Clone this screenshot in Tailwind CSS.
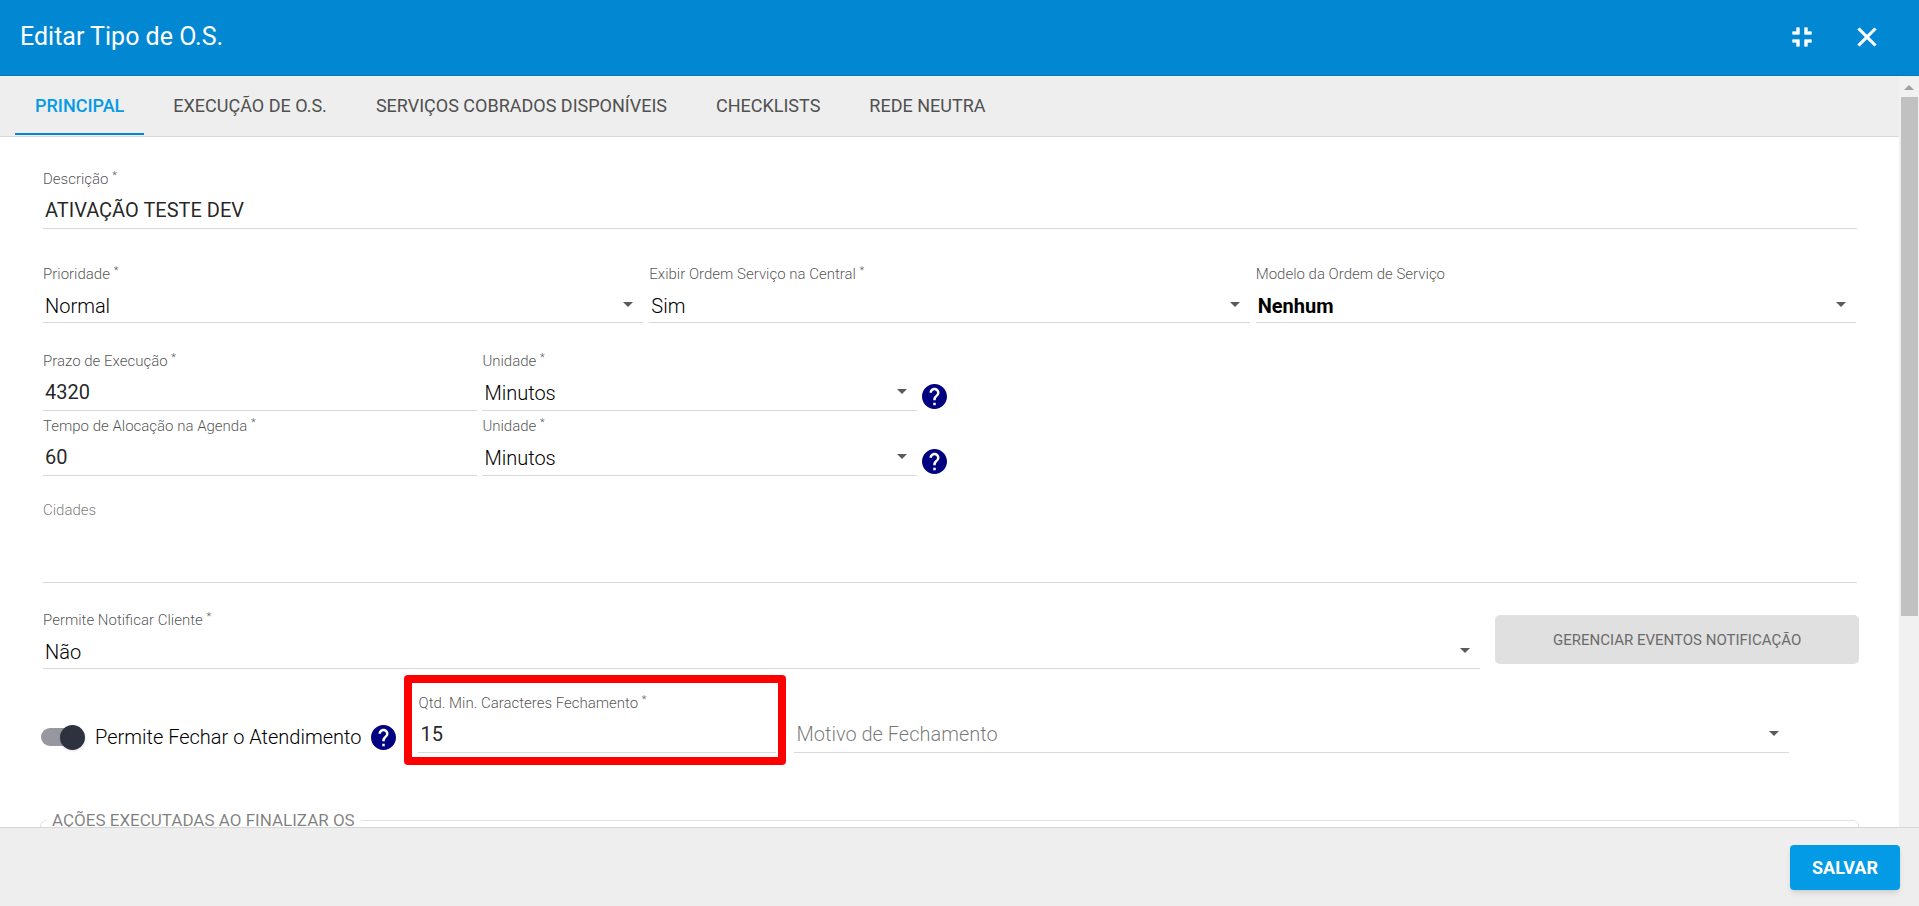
<!DOCTYPE html>
<html lang="pt-BR">
<head>
<meta charset="utf-8">
<title>Editar Tipo de O.S.</title>
<script src="https://cdn.jsdelivr.net/npm/@tailwindcss/browser@4"></script>
</head>
<body class="flex h-screen flex-col overflow-hidden bg-white font-['Roboto','Liberation_Sans',sans-serif] text-xl font-light text-black">
<svg class="hidden">
  <symbol id="caret" viewBox="0 0 10 5"><path d="M0 0h10L5 5z"/></symbol>
  <symbol id="help" viewBox="2 2 20 20"><circle cx="12" cy="12" r="9.4" fill="#fff"/><path d="M12 2C6.48 2 2 6.48 2 12s4.48 10 10 10 10-4.48 10-10S17.52 2 12 2zm1 17h-2v-2h2v2zm2.07-7.75l-.9.92C13.45 12.9 13 13.5 13 15h-2v-.5c0-1.1.45-2.1 1.17-2.83l1.24-1.26c.37-.36.59-.86.59-1.41 0-1.1-.9-2-2-2s-2 .9-2 2H8c0-2.21 1.79-4 4-4s4 1.79 4 4c0 .88-.36 1.68-.93 2.25z" fill="#000080" stroke="#000080" stroke-width="0"/></symbol>
</svg>

<header class="flex h-[76px] shrink-0 items-center justify-between border-b border-[#0a78b8] bg-[#0288d3] pr-9 pb-[2px] pl-5 text-white">
  <h1 class="text-[25px] font-normal">Editar Tipo de O.S.</h1>
  <div class="flex items-center gap-[33px]">
    <button type="button" aria-label="Restaurar tamanho" class="size-8"><svg viewBox="0 0 24 24" class="size-8" fill="#fff"><path d="M5 16h3v3h2v-5H5v2zm3-8H5v2h5V5H8v3zm6 11h2v-3h3v-2h-5v5zm2-11V5h-2v5h5V8h-3z" stroke="#fff" stroke-width=".5"/></svg></button>
    <button type="button" aria-label="Fechar" class="size-8"><svg viewBox="0 0 24 24" class="size-8" fill="#fff"><path d="M19 6.41L17.59 5 12 10.59 6.41 5 5 6.41 10.59 12 5 17.59 6.41 19 12 13.41 17.59 19 19 17.59 13.41 12z" stroke="#fff" stroke-width=".4"/></svg></button>
  </div>
</header>

<div class="flex min-h-0 flex-1">
  <main class="min-w-0 flex-1 overflow-hidden">
    <nav class="flex h-[61px] gap-[9px] border-b border-[#d8d8d8] bg-[#eee] px-[15px] text-lg leading-6 font-normal text-[#505050] uppercase">
      <a href="#principal" class="h-[59px] border-b-2 border-[#0288d1] px-5 pt-[18px] font-medium text-[#039be5]">Principal</a>
      <a href="#execucao" class="px-5 pt-[18px]">Execução de O.S.</a>
      <a href="#servicos" class="px-5 pt-[18px]">Serviços cobrados disponíveis</a>
      <a href="#checklists" class="px-5 pt-[18px]">Checklists</a>
      <a href="#rede" class="px-5 pt-[18px]">Rede neutra</a>
    </nav>

    <form id="tipo" class="px-10 pt-8">
      <div class="flex flex-col pr-[2px] pl-[3px]">
        <label for="descricao" class="text-[15px] leading-5 text-black/70">Descrição <sup class="text-[11px]">*</sup></label>
        <input id="descricao" value="ATIVAÇÃO TESTE DEV" class="mt-[3px] h-[37px] border-b border-black/15 px-[2px] font-normal text-black/87 outline-none">
      </div>

      <div class="mt-[35px] flex gap-[6px] px-[3px]">
        <div class="flex flex-1 flex-col">
          <label for="prioridade" class="text-[15px] leading-5 text-black/70">Prioridade <sup class="text-[11px]">*</sup></label>
          <div class="relative mt-[6px] border-b border-black/15">
            <select id="prioridade" class="block h-8 w-full appearance-none px-[2px] outline-none"><option>Normal</option></select>
            <svg class="pointer-events-none absolute top-[12px] right-[10px] h-[5px] w-[10px] fill-[#5a5a5a]"><use href="#caret"/></svg>
          </div>
        </div>
        <div class="flex flex-1 flex-col">
          <label for="exibir" class="text-[15px] leading-5 text-black/70">Exibir Ordem Serviço na Central <sup class="text-[11px]">*</sup></label>
          <div class="relative mt-[6px] border-b border-black/15">
            <select id="exibir" class="block h-8 w-full appearance-none px-[2px] outline-none"><option>Sim</option></select>
            <svg class="pointer-events-none absolute top-[12px] right-[10px] h-[5px] w-[10px] fill-[#5a5a5a]"><use href="#caret"/></svg>
          </div>
        </div>
        <div class="flex flex-1 flex-col">
          <label for="modelo" class="text-[15px] leading-5 text-black/70">Modelo da Ordem de Serviço</label>
          <div class="relative mt-[6px] border-b border-black/15">
            <select id="modelo" class="block h-8 w-full appearance-none px-[2px] font-bold outline-none"><option>Nenhum</option></select>
            <svg class="pointer-events-none absolute top-[12px] right-[10px] h-[5px] w-[10px] fill-[#5a5a5a]"><use href="#caret"/></svg>
          </div>
        </div>
      </div>

      <div class="mt-7 flex gap-[5px] pr-[6px] pl-[3px]">
        <div class="flex w-[24%] flex-col">
          <label for="prazo" class="text-[15px] leading-5 text-black/70">Prazo de Execução <sup class="text-[11px]">*</sup></label>
          <input id="prazo" value="4320" class="mt-[3px] h-[37px] border-b border-black/15 px-[2px] font-normal text-black/87 outline-none">
        </div>
        <div class="flex w-[24%] flex-col">
          <label for="prazo-un" class="text-[15px] leading-5 text-black/70">Unidade <sup class="text-[11px]">*</sup></label>
          <div class="relative mt-[5px] border-b border-black/15">
            <select id="prazo-un" class="block h-[34px] w-full appearance-none px-[2px] outline-none"><option>Minutos</option></select>
            <svg class="pointer-events-none absolute top-[13px] right-[10px] h-[5px] w-[10px] fill-[#5a5a5a]"><use href="#caret"/></svg>
          </div>
        </div>
        <button type="button" aria-label="Ajuda" class="mt-[33px] size-[25px]"><svg class="size-[25px]"><use href="#help"/></svg></button>
      </div>

      <div class="mt-[5px] flex gap-[5px] pr-[6px] pl-[3px]">
        <div class="flex w-[24%] flex-col">
          <label for="tempo" class="text-[15px] leading-5 text-black/70">Tempo de Alocação na Agenda <sup class="text-[11px]">*</sup></label>
          <input id="tempo" value="60" class="mt-[3px] h-[37px] border-b border-black/15 px-[2px] font-normal text-black/87 outline-none">
        </div>
        <div class="flex w-[24%] flex-col">
          <label for="tempo-un" class="text-[15px] leading-5 text-black/70">Unidade <sup class="text-[11px]">*</sup></label>
          <div class="relative mt-[5px] border-b border-black/15">
            <select id="tempo-un" class="block h-[34px] w-full appearance-none px-[2px] outline-none"><option>Minutos</option></select>
            <svg class="pointer-events-none absolute top-[13px] right-[10px] h-[5px] w-[10px] fill-[#5a5a5a]"><use href="#caret"/></svg>
          </div>
        </div>
        <button type="button" aria-label="Ajuda" class="mt-[33px] size-[25px]"><svg class="size-[25px]"><use href="#help"/></svg></button>
      </div>

      <div class="mt-6 flex flex-col pr-[2px] pl-[3px]">
        <label for="cidades" class="text-[15px] leading-5 text-black/55">Cidades</label>
        <input id="cidades" class="h-[63px] border-b border-black/15 px-[2px] outline-none">
      </div>

      <div class="mt-[27px] flex gap-[15px]">
        <div class="flex flex-1 flex-col pl-[3px]">
          <label for="notificar" class="text-[15px] leading-5 text-black/70">Permite Notificar Cliente <sup class="text-[11px]">*</sup></label>
          <div class="relative mt-[6px] border-b border-black/15">
            <select id="notificar" class="block h-8 w-full appearance-none px-[2px] outline-none"><option>Não</option></select>
            <svg class="pointer-events-none absolute top-[12px] right-[10px] h-[5px] w-[10px] fill-[#5a5a5a]"><use href="#caret"/></svg>
          </div>
        </div>
        <button type="button" class="mt-[5px] h-[49px] w-1/5 rounded-[5px] bg-[#e0e0e0] pt-[2px] text-[15px] font-normal text-[#6b6b6b]">GERENCIAR EVENTOS NOTIFICAÇÃO</button>
      </div>

      <div class="mt-6 flex">
        <label class="mt-[30px] flex h-7 items-center">
          <input type="checkbox" role="switch" checked class="peer sr-only">
          <span class="ml-px flex h-[18px] w-9 items-center justify-end rounded-full bg-[#97989f]"><span class="-mr-2 size-[25px] shrink-0 rounded-full bg-[#2d323e] shadow-sm"></span></span>
          <span class="ml-[18px]">Permite Fechar o Atendimento</span>
        </label>
        <button type="button" aria-label="Ajuda" class="mt-8 ml-[10px] size-[25px]"><svg class="size-[25px]"><use href="#help"/></svg></button>
        <div class="relative ml-[22px] flex w-[358px] flex-col">
          <label for="qtd" class="text-[15px] leading-5 text-black/70">Qtd. Min. Caracteres Fechamento <sup class="text-[11px]">*</sup></label>
          <input id="qtd" value="15" class="mt-[3px] h-[37px] border-b border-black/15 px-[2px] font-normal text-black/87 outline-none">
          <div class="pointer-events-none absolute -top-[18px] -right-[10px] -bottom-3 -left-[14px] rounded-[4px] border-8 border-[#f00]"></div>
        </div>
        <div class="relative mt-[23px] mr-[70px] ml-[18px] flex-1 border-b border-black/15">
          <select id="motivo" aria-label="Motivo de Fechamento" class="block h-9 w-full appearance-none px-[2px] text-black/55 outline-none"><option>Motivo de Fechamento</option></select>
          <svg class="pointer-events-none absolute top-[15px] right-[10px] h-[5px] w-[10px] fill-[#5a5a5a]"><use href="#caret"/></svg>
        </div>
      </div>

      <fieldset class="mt-[55px] h-40 rounded-[6px] border border-black/12 pl-[5px]">
        <legend class="px-[6px] text-[17px] leading-6 font-normal text-black/50">AÇÕES EXECUTADAS AO FINALIZAR OS</legend>
      </fieldset>
    </form>
  </main>

  <div class="flex w-5 flex-col items-center bg-[#f1f1f1] pt-[9px]" aria-hidden="true">
    <svg class="h-[5px] w-[10px] shrink-0 rotate-180 fill-[#a0a0a0]"><use href="#caret"/></svg>
    <div class="mt-[7px] h-[70%] w-[17px] bg-[#c1c1c1]"></div>
  </div>
</div>

<footer class="flex h-[79px] shrink-0 items-start justify-end border-t border-[#d6d6d6] bg-[#eee] pt-[17px] pr-[19px]">
  <button type="submit" form="tipo" class="h-[45px] w-[110px] rounded-[4px] bg-[#039be5] text-lg font-bold text-white shadow-md">SALVAR</button>
</footer>
</body>
</html>
